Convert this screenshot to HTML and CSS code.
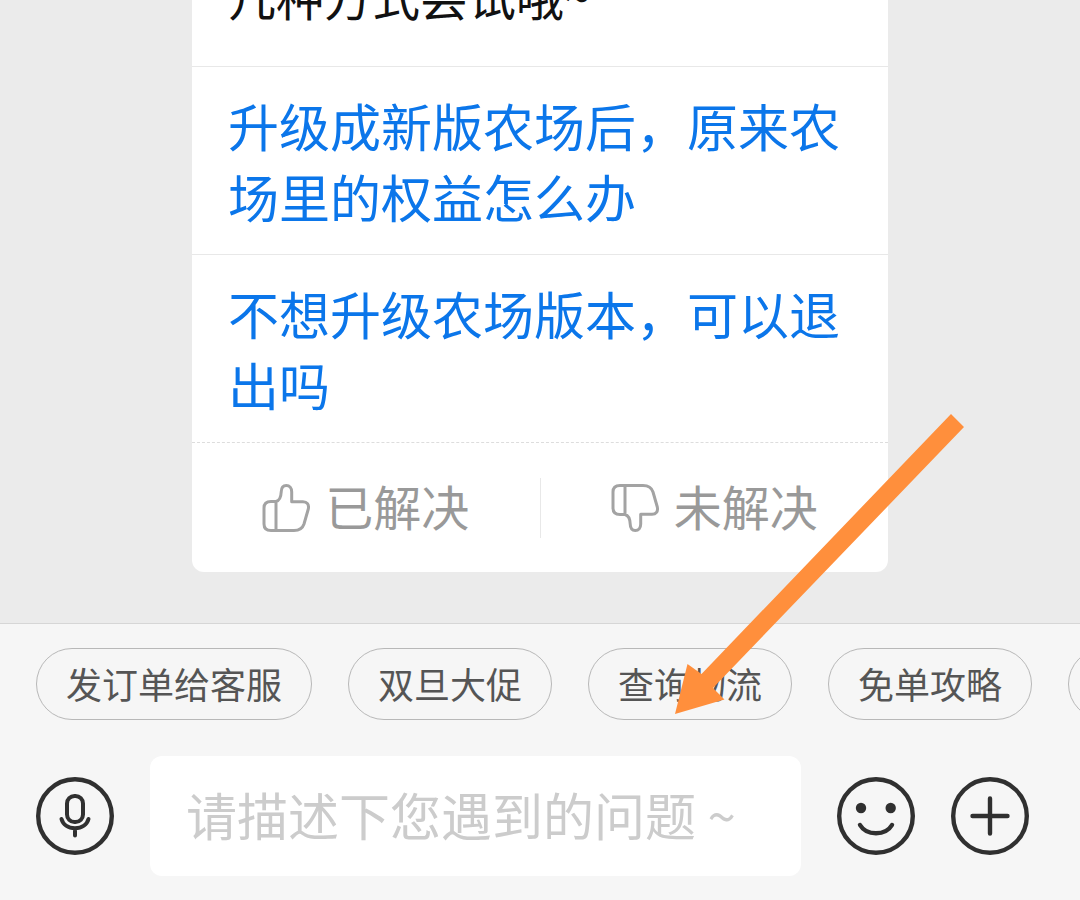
FILE: index.html
```html
<!DOCTYPE html>
<html lang="zh-CN">
<head>
    <meta charset="UTF-8">
    <meta name="viewport" content="width=device-width, initial-scale=1">
    <title>在线客服</title>
    <link rel="stylesheet" href="styles.css">
</head>
<body>
    <div class="page">
        <!-- 聊天内容 -->
        <main class="messages">
            <div class="card">
                <p class="card-text">几种方式尝试哦~</p>
                <a class="question" href="#">升级成新版农场后，原来农场里的权益怎么办</a>
                <a class="question" href="#">不想升级农场版本，可以退出吗</a>
                <div class="feedback">
                    <button type="button" class="feedback-btn">
                        <svg class="thumb" viewBox="0 0 48 48" aria-hidden="true">
                            <path d="M14 17.500H9C4 17.500 2 20 2 24V40C2 44.500 4.500 46.500 9 46.500H32C37 46.500 40.500 44.500 42 40L46.300 25C47.200 20.500 45 17.700 41 17.700H29.700V8C29.700 4 27.500 1.500 24.300 1.500C21 1.500 19.300 4 19.200 8C19 13 17.500 16.500 14 17.500V46.500"/>
                        </svg>
                        <span class="feedback-label">已解决</span>
                    </button>
                    <button type="button" class="feedback-btn">
                        <svg class="thumb thumb-down" viewBox="0 0 48 48" aria-hidden="true">
                            <path d="M14 17.500H9C4 17.500 2 20 2 24V40C2 44.500 4.500 46.500 9 46.500H32C37 46.500 40.500 44.500 42 40L46.300 25C47.200 20.500 45 17.700 41 17.700H29.700V8C29.700 4 27.500 1.500 24.300 1.500C21 1.500 19.300 4 19.200 8C19 13 17.500 16.500 14 17.500V46.500"/>
                        </svg>
                        <span class="feedback-label">未解决</span>
                    </button>
                </div>
            </div>
        </main>

        <!-- 底部输入区 -->
        <footer class="composer">
            <div class="chips">
                <button type="button" class="chip">发订单给客服</button>
                <button type="button" class="chip">双旦大促</button>
                <button type="button" class="chip">查询物流</button>
                <button type="button" class="chip">免单攻略</button>
                <button type="button" class="chip" aria-label="更多"></button>
            </div>
            <div class="input-row">
                <button type="button" class="icon-btn" aria-label="语音">
                    <svg viewBox="0 0 78 78">
                        <circle cx="39" cy="39" r="36.800"/>
                        <rect x="31" y="19" width="16" height="26" rx="7.500" stroke-width="4"/>
                        <path d="M25.500 42C27 47.500 32 51.300 39 51.300S51 47.500 52.500 42M39 51.500V58.500" stroke-width="4"/>
                    </svg>
                </button>
                <input class="text-input" type="text" aria-label="问题描述" placeholder="请描述下您遇到的问题 ~">
                <button type="button" class="icon-btn" aria-label="表情">
                    <svg viewBox="0 0 78 78">
                        <circle cx="39" cy="39" r="36.800"/>
                        <circle class="dot" cx="24" cy="31" r="5.200"/>
                        <circle class="dot" cx="53.700" cy="31" r="5.200"/>
                        <path d="M23 48C29.500 59 48.500 59 55 48"/>
                    </svg>
                </button>
                <button type="button" class="icon-btn" aria-label="更多功能">
                    <svg viewBox="0 0 78 78">
                        <circle cx="39" cy="39" r="36.800"/>
                        <path d="M39 21.500V56.500M21.500 39H56.500"/>
                    </svg>
                </button>
            </div>
        </footer>

        <!-- 指引箭头 -->
        <svg class="arrow" viewBox="0 0 289 300" aria-hidden="true">
            <path d="M0 300L12.500 250L26.500 260L276 0L289 13L38 274L49.500 285.500Z"/>
        </svg>
    </div>
</body>
</html>
```
FILE: styles.css
```css
:root {
    --bg: #ebebeb;
    --panel: #f6f6f6;
    --link: #0b76ea;
    --muted: #999;
    --line: #e8e8e8;
    --ink: #303030;
}
* {
    box-sizing: border-box;
}
body {
    font-family: "Noto Sans CJK SC", sans-serif;
    margin: 0;
    background: var(--bg);
}
button {
    font-family: inherit;
    background: none;
    border: none;
    padding: 0;
    cursor: pointer;
}
.page {
    position: relative;
    display: flex;
    flex-direction: column;
    height: 100vh;
    overflow: hidden;
}

/* 聊天内容 */
.messages {
    flex: 1;
    min-height: 0;
    display: flex;
    flex-direction: column;
    justify-content: flex-end;
    padding: 0 192px 51px;
}
.card {
    background: white;
    border-radius: 12px;
}
.card-text {
    margin: 0;
    padding: 0 36px 35px;
    font-size: 48px;
    line-height: 71px;
    color: #111;
}
.question {
    display: block;
    padding: 23px 36px 22px;
    border-top: 1px solid var(--line);
    font-size: 51px;
    line-height: 71px;
    color: var(--link);
    text-decoration: none;
}
.feedback {
    display: flex;
    padding: 35px 0 34px;
    border-top: 1px dashed #ddd;
}
.feedback-btn {
    flex: 1;
    display: flex;
    align-items: center;
    justify-content: center;
    gap: 15px;
    height: 60px;
    font-size: 48px;
    color: var(--muted);
}
.feedback-btn:first-child {
    border-right: 1px solid var(--line);
}
.feedback-label {
    line-height: 54px;
    padding-bottom: 6px;
}
.thumb {
    width: 48px;
    height: 48px;
    fill: none;
    stroke: #a3a3a3;
    stroke-width: 3;
    stroke-linejoin: round;
}
.thumb-down {
    transform: scaleY(-1);
}

/* 底部输入区 */
.composer {
    padding: 24px 0;
    background: var(--panel);
    border-top: 1px solid #d6d6d6;
}
.chips {
    display: flex;
    gap: 36px;
    padding-left: 36px;
    margin-bottom: 36px;
    overflow: hidden;
}
.chip {
    flex: none;
    min-width: 204px;
    height: 72px;
    padding: 0 29px 2px;
    border: 1px solid #b8b8b8;
    border-radius: 36px;
    font-size: 36px;
    color: #555;
}
.input-row {
    display: flex;
    align-items: center;
    gap: 36px;
    padding: 0 51px 0 36px;
}
.text-input {
    flex: 1;
    min-width: 0;
    height: 120px;
    padding: 0 36px 4px;
    border: none;
    border-radius: 12px;
    background: white;
    font-family: inherit;
    font-size: 51px;
    color: #111;
}
.text-input::placeholder {
    color: #ccc;
}
.icon-btn {
    width: 78px;
    height: 78px;
}
.icon-btn svg {
    display: block;
    fill: none;
    stroke: var(--ink);
    stroke-width: 4.4;
    stroke-linecap: round;
}
.icon-btn .dot {
    fill: var(--ink);
    stroke: none;
}

/* 指引箭头 */
.arrow {
    position: absolute;
    left: 675px;
    top: 414px;
    width: 289px;
    height: 300px;
    fill: #ff8f3c;
    pointer-events: none;
}
```
